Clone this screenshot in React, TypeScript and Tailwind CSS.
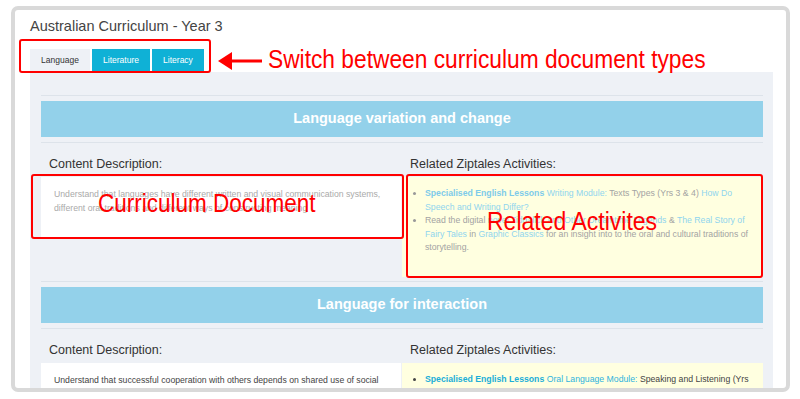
import type { ReactNode } from 'react';

type SectionProps = {
  title: string;
  faded?: boolean;
  className?: string;
  description: string;
  activities: ReactNode;
};

function Section({ title, faded, className, description, activities }: SectionProps) {
  return (
    <div className={`border-t border-[#dde3ea] pt-[5px] ${className ?? ''}`}>
      <div className="flex h-[36px] items-center justify-center bg-[#93d1ea] text-[14.5px] font-bold text-white">
        {title}
      </div>
      <div className="mt-[5px] grid grid-cols-2 border-t border-[#dde3ea] pt-[13px]">
        <div>
          <h3 className="pl-[8px] text-[12.5px] leading-[16px] text-[#333]">Content Description:</h3>
          <div
            className={`mt-[5px] mr-px bg-white pt-[10px] pr-[10px] pb-[23px] pl-[13px] text-[8.7px] leading-[14px] ${
              faded ? 'text-[#aaaaaa]' : 'text-[#444]'
            }`}
          >
            {description}
          </div>
        </div>
        <div>
          <h3 className="pl-[8px] text-[12.5px] leading-[16px] text-[#333]">Related Ziptales Activities:</h3>
          <div className="mt-[5px] bg-[#ffffe0] pt-[10px] pr-[10px] pb-[22px] text-[8.7px] leading-[13.5px]">
            {activities}
          </div>
        </div>
      </div>
    </div>
  );
}

export default function App() {
  return (
    <div className="relative h-[399px] w-[800px] overflow-hidden bg-white pt-[6px] pl-[11px] font-['Liberation_Sans',Arial,sans-serif]">
      <div className="h-[386px] w-[779px] overflow-hidden rounded-[7px] border-4 border-[#d9d9d9] bg-white">
        <h1 className="pt-[6px] pl-[15px] text-[14.5px] leading-[20px] text-[#444]">Australian Curriculum - Year 3</h1>

        {/* tabs */}
        <div className="mt-[13px] ml-[15px] flex gap-[2px] text-[8.5px]">
          <div className="flex h-[23px] w-[60px] items-center justify-center bg-[#eef1f6] text-[#333]">Language</div>
          <div className="flex h-[23px] w-[58px] items-center justify-center bg-[#0fb1d6] text-white">Literature</div>
          <div className="flex h-[23px] w-[52px] items-center justify-center bg-[#0fb1d6] text-white">Literacy</div>
        </div>

        <div className="ml-[15px] w-[743px] bg-[#eef1f6] pt-[23px] pr-[10px] pl-[11px]">
          <Section
            faded
            title="Language variation and change"
            description="Understand that languages have different written and visual communication systems, different oral traditions and different ways of constructing meaning"
            activities={
              <ul className="list-disc pl-[23px] text-[#a3a3a3] marker:text-[#999]">
                <li>
                  <span className="font-bold text-[#7dcbea]">Specialised English Lessons</span>{' '}
                  <span className="text-[#90d5ee]">Writing Module:</span> Texts Types (Yrs 3 &amp; 4){' '}
                  <span className="text-[#90d5ee]">How Do Speech and Writing Differ?</span>
                </li>
                <li>
                  Read the digital <span className="text-[#90d5ee]">novel Tiddalick and Other Dreamtime Legends</span>{' '}
                  &amp; <span className="text-[#90d5ee]">The Real Story of Fairy Tales</span> in{' '}
                  <span className="text-[#90d5ee]">Graphic Classics</span> for an insight into to the oral and cultural
                  traditions of storytelling.
                </li>
              </ul>
            }
          />
          <Section
            className="mt-[4px]"
            title="Language for interaction"
            description="Understand that successful cooperation with others depends on shared use of social conventions, including turn-taking patterns, and forms of address that vary according to the degree of formality in social situations"
            activities={
              <ul className="list-disc pl-[23px] text-[#444] marker:text-[#444]">
                <li>
                  <span className="font-bold text-[#1aaed8]">Specialised English Lessons</span>{' '}
                  <span className="text-[#2fb4de]">Oral Language Module:</span> Speaking and Listening (Yrs 3 &amp; 4)
                </li>
              </ul>
            }
          />
        </div>
      </div>

      {/* annotations */}
      <div className="absolute top-[39px] left-[19px] h-[34px] w-[192px] rounded-[3px] border-2 border-[#ff0000]" />
      <svg className="absolute top-[50px] left-[216px]" width="48" height="22" viewBox="0 0 48 22">
        <polygon points="2,11 16,2 16,20" fill="#ff0000" />
        <rect x="14" y="9.5" width="32" height="3" fill="#ff0000" />
      </svg>
      <div className="absolute top-[46px] left-[268px] origin-left scale-x-[0.875] text-[26px] leading-none whitespace-nowrap text-[#ff0000]">
        Switch between curriculum document types
      </div>

      <div className="absolute top-[174px] left-[31px] h-[65px] w-[373px] rounded-[3px] border-2 border-[#ff0000]" />
      <div className="absolute top-[174px] left-[406px] h-[104px] w-[357px] rounded-[3px] border-2 border-[#ff0000]" />
      <div className="absolute top-[191px] left-[98px] origin-left scale-x-[0.9] text-[25px] leading-none whitespace-nowrap text-[#ff0000]">
        Curriculum Document
      </div>
      <div className="absolute top-[208px] left-[487px] origin-left scale-x-[0.885] text-[26px] leading-none whitespace-nowrap text-[#ff0000]">
        Related Activites
      </div>
    </div>
  );
}
